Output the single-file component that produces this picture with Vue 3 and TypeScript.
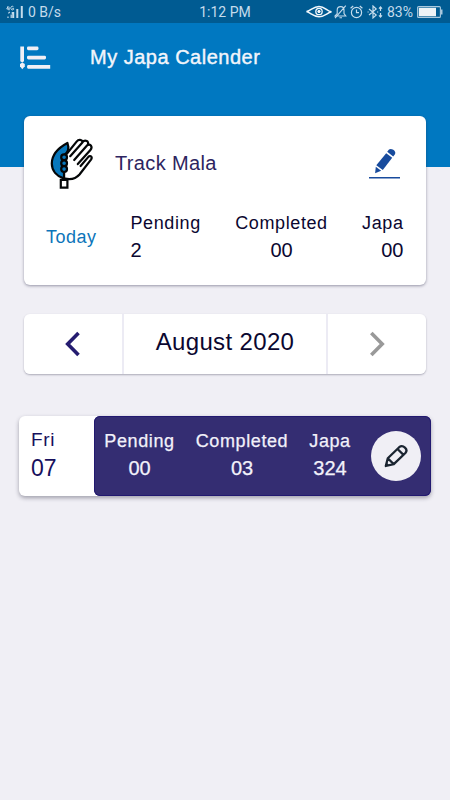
<script setup lang="ts">
import { ref } from 'vue'

interface Stat {
  key: string
  label: string
  value: string
}

const today = ref<Stat[]>([
  { key: 'pending', label: 'Pending', value: '2' },
  { key: 'completed', label: 'Completed', value: '00' },
  { key: 'japa', label: 'Japa', value: '00' },
])

const day = ref<Stat[]>([
  { key: 'pending', label: 'Pending', value: '00' },
  { key: 'completed', label: 'Completed', value: '03' },
  { key: 'japa', label: 'Japa', value: '324' },
])
</script>

<template>
  <div class="screen">
    <header class="status">
      <div class="status-left">
        <svg width="18" height="14" viewBox="0 0 18 14" fill="none" stroke="#c5dcec">
          <path d="M2.2 1 .8 4H3.6M3 1.8V5.4M7.4 1.7C5.8.5 4.7 1.8 4.8 3.3S6.6 5.5 7.6 4.4V3.4H6.3" stroke-width="1" />
          <path d="M2 11.5V13M5.2 9.5V13M3.8 6.8 2.4 8.4M6.3 7V9" stroke-width="1.2" />
          <path d="M7.2 7V13M11.3 4V13M15.8 1V13" stroke-width="2" />
        </svg>
        <span>0 B/s</span>
      </div>
      <div class="status-time">1:12 PM</div>
      <div class="status-right">
        <svg class="eye" width="26" height="14" viewBox="0 0 26 14" fill="none" stroke="#f2f8fc">
          <path d="M.5 6.5C5 6 7 1.4 13 1.4S21 6.4 25.5 6.8C21 8 18.5 11.7 13 11.7S5 8 .5 6.5Z" stroke-width="1.5" />
          <circle cx="13" cy="6.5" r="3.2" stroke-width="1.3" />
          <circle cx="13" cy="6.5" r="1.2" fill="#f2f8fc" />
        </svg>
        <svg class="bell" width="13" height="14" viewBox="0 0 13 14" fill="none" stroke="#c5dcec" stroke-width="1.1">
          <path d="M1 11H11.8L10 8.5V5C10 3 8.6 1.6 6.7 1.6S3.2 3 3.2 5V8.5ZM5.5 12.8H8M11.8 .6 1 13.2" />
        </svg>
        <svg class="alarm" width="13" height="14" viewBox="0 0 13 14" fill="none" stroke="#c5dcec" stroke-width="1.2">
          <circle cx="6.5" cy="7.5" r="5.1" />
          <path d="M6.5 4.5V7.7H9M.6 3.2 3.2 1M12.4 3.2 9.8 1" />
        </svg>
        <svg class="bt" width="17" height="14" viewBox="0 0 17 14" fill="none" stroke="#c5dcec" stroke-width="1.2">
          <path d="M2 4 9.2 10 6 12.9V1L9.2 4 2 10M13.5 2V6M12 3.7 13.5 2 15 3.7M13.5 8V12M12 10.3 13.5 12 15 10.3M.5 7H1.7M10 7H11.2" />
        </svg>
        <span class="percent">83%</span>
        <svg width="26" height="12" viewBox="0 0 26 12">
          <rect x=".6" y=".6" width="22.8" height="10.8" rx="1" fill="none" stroke="#a9c9de" stroke-width="1.1" />
          <rect x="1.8" y="1.8" width="17.2" height="8.4" fill="#edf3f6" />
          <path d="M24 3.5H25.5V8.5H24Z" fill="#a9c9de" />
        </svg>
      </div>
    </header>

    <div class="banner">
      <svg class="menu" width="32" height="26" viewBox="0 0 32 26" fill="#f0eff5">
        <path d="M.3.5H4V15.2L2.2 16.6 .3 15.2Z" />
        <path d="M0 18 2.3 16.6 4.8 18V20.2L2.3 23.2 0 20.2Z" />
        <rect x="7" y=".5" width="11.5" height="3.7" rx="1.4" />
        <rect x="7" y="9.7" width="19" height="3.8" rx="1.4" />
        <path d="M8.2 19H30.2V22.7H8.2Q7 22.7 7 20.8T8.2 19Z" />
      </svg>
      <h1>My Japa Calender</h1>
    </div>

    <main>
      <section class="track card">
        <div class="track-head">
          <svg class="hand" width="44" height="52" viewBox="0 0 44 52" fill="none" stroke="#050708" stroke-width="2.2" stroke-linecap="round" stroke-linejoin="round">
            <path d="M17.4 5C10 9 1.8 15.5 1.8 25.5C1.8 32.5 6.5 38.2 14 40.6V17.5C18.6 14 19 9.2 17.4 5Z" fill="#0878bd" />
            <path d="M15.5 16.5 27 3.2C28.8 1.2 31.8 1.6 32.6 3.8C35 1.6 38.8 3.4 38 6.6C41 6 42.6 9.4 40.4 11.8C42.8 13 42.8 15.6 40.8 17.6C42.2 18.6 42 20.4 41 21.6L29.5 36.5C25.8 40.8 21.5 42 15 40.6V33Z" fill="#fff" stroke="none" />
            <path d="M16.8 15.8 26.6 3.6C28.6 1.1 31.7 1.6 32.6 3.9M20.2 18.2 32.4 4.4C35 1 39.6 3.4 37.7 6.8M24.2 22 37 7.4C40.4 4.9 43 9 40.4 12L27.8 26.1M30.6 28 38.4 18.9C40.6 16.7 42.7 19 41 21.6L29.5 36.5C25.8 40.8 21.5 42 15 40.6" />
            <circle cx="14.1" cy="19.3" r="2.9" fill="#0878bd" />
            <circle cx="14.1" cy="25.2" r="2.9" fill="#0878bd" />
            <circle cx="14.1" cy="31.1" r="2.9" fill="#0878bd" />
            <path d="M14.1 34V41.5" />
            <path d="M10.8 41.8H17.4V49.6H10.8Z" fill="#fff" stroke-linejoin="miter" />
          </svg>
          <h2>Track Mala</h2>
          <button class="edit" aria-label="Edit mala">
            <svg width="31" height="32" viewBox="0 0 31 32" fill="#184b9d">
              <path d="M17.2 6.2 23.2 10.8 13.8 22.9 7.3 18.2Z" />
              <path d="M18.2 4.8 20 2.6C22.3.3 28.2 4.4 25.8 7.4L24.2 9.5Z" />
              <path d="M6.8 19.8 12.2 23.8 6.1 26.2Z" />
              <rect y="30" width="31" height="1.5" />
            </svg>
          </button>
        </div>
        <div class="track-body">
          <span class="today">Today</span>
          <div v-for="s in today" :key="s.key" class="stat" :class="s.key">
            <span class="label">{{ s.label }}</span>
            <span class="value">{{ s.value }}</span>
          </div>
        </div>
      </section>

      <nav class="month card">
        <button aria-label="Previous month">
          <svg width="16" height="26" viewBox="0 0 16 26" fill="none" stroke="#251c70" stroke-width="3.6">
            <path d="M13.5 2 2.7 13 13.5 24" />
          </svg>
        </button>
        <div class="month-name">August 2020</div>
        <button aria-label="Next month">
          <svg width="16" height="26" viewBox="0 0 16 26" fill="none" stroke="#999" stroke-width="3.6">
            <path d="M2.3 2 13.2 13 2.3 24" />
          </svg>
        </button>
      </nav>

      <section class="day">
        <div class="date">
          <span class="weekday">Fri</span>
          <span class="number">07</span>
        </div>
        <div class="counts">
          <div v-for="s in day" :key="s.key" class="stat" :class="s.key">
            <span class="label">{{ s.label }}</span>
            <span class="value">{{ s.value }}</span>
          </div>
          <button class="round" aria-label="Edit day">
            <svg width="24" height="24" viewBox="0 0 24 24" fill="none" stroke="#1b2531" stroke-width="2.3" stroke-linejoin="round">
              <path d="M1.8 22 3.8 14.3 15.2 3.2C19 .2 24.6 5.3 21.4 9L9.8 20.2ZM3.8 14.3 9.8 20.2M13.5 5 19.5 10.8" />
              <path d="M1.5 22.3 2.5 18.5 5.4 21.3Z" fill="#1b2531" stroke="none" />
            </svg>
          </button>
        </div>
      </section>
    </main>
  </div>
</template>

<style>
body {
  margin: 0;
  background: #f0eff5;
}
</style>

<style scoped>
.screen {
  box-sizing: border-box;
  width: 450px;
  height: 800px;
  overflow: hidden;
  background: linear-gradient(#0078c1 167px, #f0eff5 167px);
  font-family: "Liberation Sans", Arial, sans-serif;
  color: #0b0730;
}
button {
  border: 0;
  padding: 0;
  background: none;
  display: flex;
  align-items: center;
  justify-content: center;
}
svg {
  display: block;
  flex: none;
}
.status {
  display: grid;
  grid-template-columns: 150px 150px 150px;
  height: 22.5px;
  background: #005b92;
  color: #c5dcec;
  font: 14px/24px Roboto, sans-serif;
}
.status-left {
  display: flex;
  align-items: center;
  padding-left: 6px;
  gap: 4px;
}
.status-left svg {
  margin-top: -1px;
}
.status-time {
  text-align: center;
}
.status-right {
  display: flex;
  align-items: center;
  padding-left: 6px;
}
.bell {
  margin-left: 2px;
}
.alarm {
  margin-left: 3px;
}
.bt {
  margin-left: 4px;
}
.percent {
  width: 26px;
  margin: 0 4px 0 3px;
}
.banner {
  display: flex;
  align-items: flex-start;
  height: 93.5px;
  padding-left: 20px;
}
.menu {
  margin-top: 23px;
}
h1 {
  margin: 19px 0 0 38px;
  font-size: 20px;
  line-height: 30px;
  font-weight: 400;
  letter-spacing: 0.5px;
  color: #f2f5fb;
  -webkit-text-stroke: 0.4px #f2f5fb;
}
.card {
  margin: 0 24px;
  background: #fff;
  border-radius: 6px;
  box-shadow: 0 1px 3px rgba(40, 40, 70, 0.45);
}
.track {
  height: 169px;
}
.track-head {
  display: flex;
  align-items: flex-start;
  height: 94px;
  padding: 0 26px;
}
.hand {
  margin-top: 22px;
}
h2 {
  flex: 1;
  margin: 32px 0 0 21px;
  font-size: 20px;
  line-height: 30px;
  font-weight: 400;
  letter-spacing: 0.35px;
  color: #2d2460;
}
.edit {
  margin-top: 31px;
}
.track-body {
  display: grid;
  grid-template-columns: 84.5px 104px 94px 75px;
  padding-left: 22px;
}
.today {
  align-self: center;
  font-size: 18px;
  letter-spacing: 0.5px;
  color: #0c75ba;
}
.stat {
  display: flex;
  flex-direction: column;
  line-height: 27px;
}
.label {
  font-size: 18px;
  letter-spacing: 0.6px;
}
.value {
  font-size: 20px;
}
.track-body .completed {
  align-items: center;
}
.track-body .japa {
  align-items: flex-end;
}
.month {
  display: grid;
  grid-template-columns: 98px 202px 98px;
  gap: 2px;
  height: 60px;
  margin-top: 29px;
  background: linear-gradient(90deg, #fff 98px, #ecebf4 98px 100px, #fff 100px 302px, #ecebf4 302px 304px, #fff 304px);
  box-shadow: 0 1px 2px rgba(40, 40, 70, 0.35);
}
.month-name {
  text-align: center;
  font-size: 24px;
  line-height: 56px;
  letter-spacing: 0.35px;
}
.day {
  display: flex;
  height: 80px;
  margin: 42px 19px 0;
  background: #fff;
  border-radius: 6px;
  box-shadow: 0 2px 4px rgba(40, 40, 60, 0.4);
}
.date {
  display: flex;
  flex-direction: column;
  box-sizing: border-box;
  width: 75px;
  padding: 8px 0 0 12px;
  color: #17105d;
}
.weekday {
  font-size: 19px;
  line-height: 31px;
  letter-spacing: 0.6px;
}
.number {
  font-size: 23px;
  line-height: 26px;
}
.counts {
  box-sizing: border-box;
  display: grid;
  grid-template-columns: 93px 94px 80px 50px;
  column-gap: 0;
  align-items: start;
  width: 337px;
  padding: 12px 0 0;
  border-radius: 6px;
  background: #342d72;
  box-shadow: inset 0 0 0 1px #221970;
  color: #f2f1fa;
}
.counts .stat {
  align-items: center;
  -webkit-text-stroke: 0.25px #f2f1fa;
}
.counts .pending {
  padding-right: 2px;
}
.counts .completed {
  width: 110px;
}
.counts .japa {
  width: 98px;
}
.round {
  width: 50px;
  height: 50px;
  margin: 3px 0 0 10px;
  border-radius: 50%;
  background: #f0eff5;
}
</style>
